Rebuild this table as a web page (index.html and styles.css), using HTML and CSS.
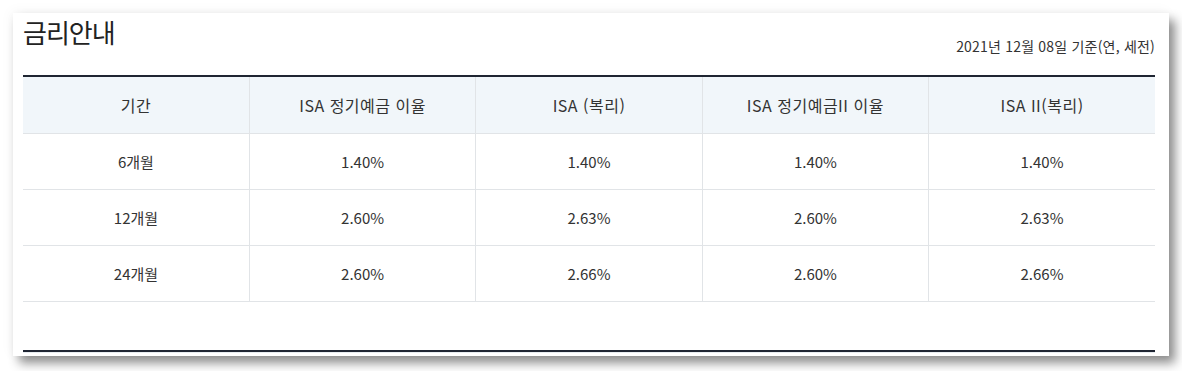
FILE: index.html
```html
<!DOCTYPE html>
<html lang="ko">
<head>
<meta charset="utf-8">
<link rel="stylesheet" href="styles.css">
</head>
<body>
<div class="card">
  <div class="head">
    <h2 class="title">금리안내</h2>
    <p class="date">2021년 12월 08일 기준(연, 세전)</p>
  </div>
  <table class="rates">
    <thead>
      <tr><th>기간</th><th>ISA 정기예금 이율</th><th>ISA (복리)</th><th>ISA 정기예금II 이율</th><th>ISA II(복리)</th></tr>
    </thead>
    <tbody>
      <tr><td>6개월</td><td>1.40%</td><td>1.40%</td><td>1.40%</td><td>1.40%</td></tr>
      <tr><td>12개월</td><td>2.60%</td><td>2.63%</td><td>2.60%</td><td>2.63%</td></tr>
      <tr><td>24개월</td><td>2.60%</td><td>2.66%</td><td>2.60%</td><td>2.66%</td></tr>
    </tbody>
  </table>
  <div class="foot"></div>
</div>
</body>
</html>
```

FILE: styles.css
```css
html, body { margin: 0; padding: 0; background: #fff; }
body {
  font-family: "Noto Sans CJK KR", "Noto Sans", sans-serif;
  color: #333;
  padding: 13px 0 0 13px;
  width: 1182px;
  height: 371px;
  box-sizing: border-box;
  overflow: hidden;
}
.card {
  width: 1156px;
  height: 343px;
  box-sizing: border-box;
  background: #fff;
  padding: 0 14px 0 10px;
  box-shadow: 6px 7px 10px rgba(0,0,0,0.45), -2px -2px 12px rgba(0,0,0,0.04);
  display: flex;
  flex-direction: column;
}
.head {
  height: 62px;
  display: flex;
  justify-content: space-between;
  align-items: flex-start;
}
.title {
  margin: 1px 0 0 0;
  font-size: 26px;
  font-weight: 400;
  letter-spacing: -1px;
  line-height: 36px;
  color: #222;
}
.date {
  margin: 24px 0 0;
  font-size: 14px;
  letter-spacing: 0.2px;
  line-height: 18px;
  color: #333;
}
.rates {
  width: 1132px;
  border-collapse: collapse;
  table-layout: fixed;
  border-top: 2px solid #1f2532;
}
.rates th, .rates td {
  text-align: center;
  font-size: 15px;
  letter-spacing: 0;
  font-weight: 400;
  color: #333;
  border-bottom: 1px solid #e1e4e7;
  border-left: 1px solid #e1e4e7;
  padding: 0;
}
.rates th { font-size: 16px; letter-spacing: 0.5px; }
.rates th:first-child, .rates td:first-child { border-left: none; }
.rates th { height: 56px; background: #f1f6fa; }
.rates td { height: 55px; }
.foot {
  margin-top: 48px;
  width: 1132px;
  height: 2px;
  background: #1f2532;
  border-bottom: 1px solid #e8ecf0;
}
```
